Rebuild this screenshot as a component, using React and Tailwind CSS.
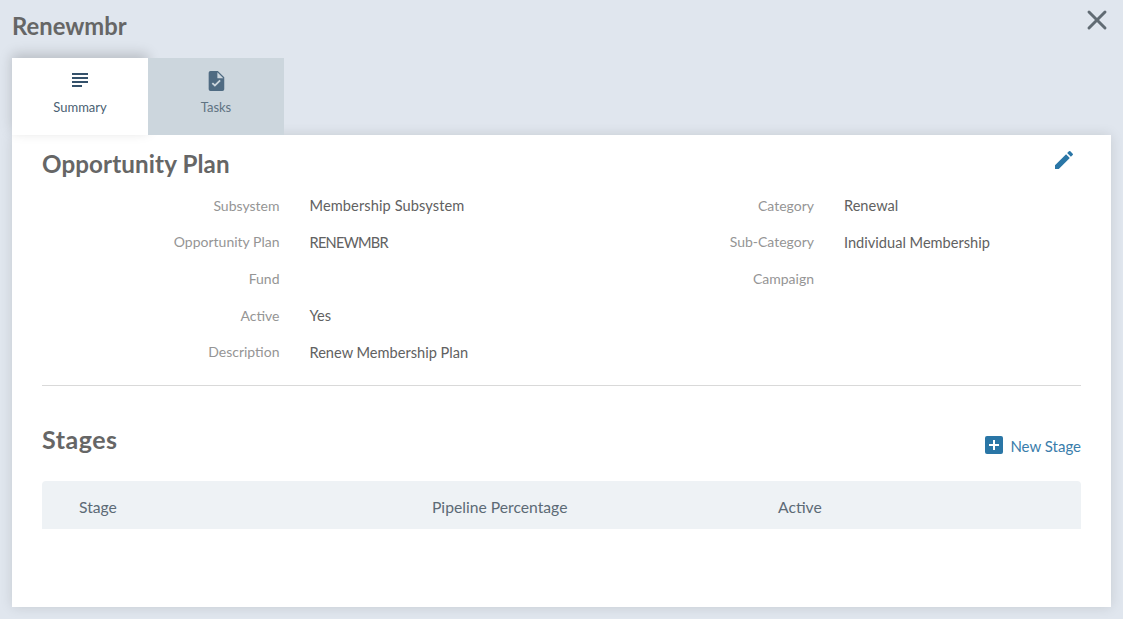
import React from 'react';
import { X } from 'lucide-react';

const font = "font-['Lato','Noto_Sans',sans-serif]";

const Field = ({ label, value, valueClass = '' }) => (
  <div className="flex h-[36.7px] items-center">
    <div className="w-[237.5px] pb-[2px] text-right text-[14px] text-[#959595]">{label}</div>
    <div className={`ml-[30px] text-[14.6px] text-[#616161] ${valueClass}`}>{value}</div>
  </div>
);

const leftFields = [
  ['Subsystem', 'Membership Subsystem', 'tracking-[0.1px]'],
  ['Opportunity Plan', 'RENEWMBR', 'tracking-[-0.75px]'],
  ['Fund', ''],
  ['Active', 'Yes'],
  ['Description', 'Renew Membership Plan'],
];

const rightFields = [
  ['Category', 'Renewal'],
  ['Sub-Category', 'Individual Membership'],
  ['Campaign', ''],
];

export default function App() {
  return (
    <div className={`${font} h-[619px] w-[1123px] overflow-hidden bg-[#e0e6ee] px-3`}>
      <div className="flex h-[58px] items-start justify-between">
        <h1 className="mt-[9px] text-[23.8px] leading-[34px] font-bold text-[#666666]">Renewmbr</h1>
        <button className="mt-[4px] mr-[-2px] text-[#616b73]">
          <X size={32} strokeWidth={2.2} />
        </button>
      </div>

      <div className="flex h-[77px]">
        <div className="relative z-10 flex w-[136px] flex-col items-center bg-white pt-[13px] shadow-[0_-4px_12px_rgba(0,0,0,0.18)]">
          <svg width="20" height="20" viewBox="0 0 20 20" className="text-[#34516b]" fill="currentColor">
            <path d="M2 2h16v2H2zM2 6h16v2H2zM2 10h16v2H2zM2 14h10v2H2z" />
          </svg>
          <span className="mt-[7px] text-[13px] leading-[18px] text-[#4a5f72]">Summary</span>
        </div>
        <div className="relative z-10 flex w-[136px] flex-col items-center bg-[#ccd6dd] pt-[12px]">
          <svg width="22" height="22" viewBox="0 0 24 24" className="text-[#4f6b82]" fill="currentColor">
            <path d="M6 1h8l7 7v13a2 2 0 0 1-2 2H6a2 2 0 0 1-2-2V3a2 2 0 0 1 2-2zm7.5 1.5V9H20zM10.8 18.4l6.4-6.4-1.4-1.4-5 5-2.1-2.1-1.4 1.4z" fillRule="evenodd" />
          </svg>
          <span className="mt-[6px] text-[13px] leading-[18px] text-[#5f7382]">Tasks</span>
        </div>
      </div>

      <main className="h-[472px] w-[1099px] bg-white px-[30px] shadow-[0_0_12px_rgba(0,0,0,0.12)]">
        <div className="flex items-start justify-between pt-[12px]">
          <h2 className="text-[24.2px] leading-[34px] font-bold tracking-[0.1px] text-[#666666]">Opportunity Plan</h2>
          <svg width="24" height="24" viewBox="0 0 24 24" className="mt-[1px] mr-[5px] text-[#2a76a6]" fill="currentColor">
            <path d="M3 17.25V21h3.75L17.81 9.94l-3.75-3.75zM20.71 7.04a1 1 0 0 0 0-1.41l-2.34-2.34a1 1 0 0 0-1.41 0l-1.83 1.83 3.75 3.75z" />
          </svg>
        </div>

        <div className="mt-[6.7px] flex border-b border-[#d9d9d9] pb-[13.8px]">
          <div className="w-[534.5px]">
            {leftFields.map(([label, value, valueClass]) => (
              <Field key={label} label={label} value={value} valueClass={valueClass} />
            ))}
          </div>
          <div>
            {rightFields.map(([label, value]) => (
              <Field key={label} label={label} value={value} />
            ))}
          </div>
        </div>

        <div className="mt-[36px] flex items-start justify-between">
          <h2 className="text-[25px] leading-[34px] font-bold tracking-[0.5px] text-[#666666]">Stages</h2>
          <button className="mt-[12px] flex h-[22px] items-center text-[15px] text-[#3a7dab]">
            <span className="flex h-[18px] w-[18px] items-center justify-center rounded-[2px] bg-[#2a76a6]">
              <svg width="12" height="12" viewBox="0 0 12 12" fill="white">
                <path d="M5 1h2v4h4v2H7v4H5V7H1V5h4z" />
              </svg>
            </span>
            <span className="ml-[7px] pt-[2px]">New Stage</span>
          </button>
        </div>

        <div className="mt-[25px] flex h-[48px] items-center rounded-t-[4px] bg-[#eef2f5] pt-[5px] text-[15.7px] text-[#5c6a75]">
          <div className="w-[390px] pl-[37px]">Stage</div>
          <div className="w-[346px]">Pipeline Percentage</div>
          <div>Active</div>
        </div>
      </main>
    </div>
  );
}
